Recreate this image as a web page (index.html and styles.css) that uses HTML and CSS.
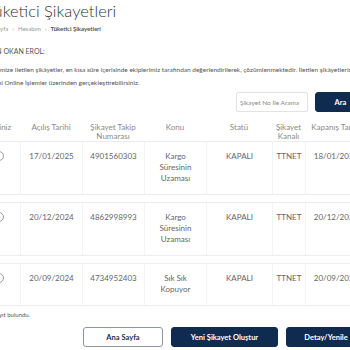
FILE: index.html
```html
<!DOCTYPE html>
<html lang="tr">
<head>
  <meta charset="UTF-8">
  <meta name="viewport" content="width=device-width, initial-scale=1.0">
  <title>Tüketici Şikayetleri</title>
  <link rel="stylesheet" href="styles.css">
</head>
<body>
  <div class="page">
    <div class="intro">
      <h1 class="page-title">Tüketici Şikayetleri</h1>
      <div class="breadcrumb">
        <span>Ana Sayfa</span><span class="sep">›</span><span>Hesabım</span><span class="sep">›</span><span class="current">Tüketici Şikayetleri</span>
      </div>
      <p class="greeting">SAYIN OKAN EROL:</p>
      <p class="info">Şirketimize iletilen şikâyetler, en kısa süre içerisinde ekiplerimiz tarafından değerlendirilerek, çözümlenmektedir. İletilen şikâyetlerinizin<br>takibini Online İşlemler üzerinden gerçekleştirebilirsiniz.</p>
    </div>

    <div class="search-bar">
      <input class="search-input" type="text" placeholder="Şikayet No İle Arama">
      <button class="btn btn-dark search-btn">Ara</button>
    </div>

    <div class="complaints">
      <div class="head">
        <div>Seçiniz</div>
        <div>Açılış Tarihi</div>
        <div>Şikayet Takip Numarası</div>
        <div>Konu</div>
        <div>Statü</div>
        <div>Şikayet Kanalı</div>
        <div>Kapanış Tarihi</div>
      </div>
      <div class="row">
        <div><span class="radio"></span></div>
        <div>17/01/2025</div>
        <div>4901560303</div>
        <div>Kargo<br>Süresinin<br>Uzaması</div>
        <div>KAPALI</div>
        <div>TTNET</div>
        <div>18/01/2025</div>
      </div>
      <div class="row">
        <div><span class="radio"></span></div>
        <div>20/12/2024</div>
        <div>4862998993</div>
        <div>Kargo<br>Süresinin<br>Uzaması</div>
        <div>KAPALI</div>
        <div>TTNET</div>
        <div>20/12/2024</div>
      </div>
      <div class="row">
        <div><span class="radio"></span></div>
        <div>20/09/2024</div>
        <div>4734952403</div>
        <div>Sık Sık<br>Kopuyor</div>
        <div>KAPALI</div>
        <div>TTNET</div>
        <div>20/09/2024</div>
      </div>
    </div>

    <p class="count">3 kayıt bulundu.</p>

    <div class="actions">
      <button class="btn btn-light">Ana Sayfa</button>
      <button class="btn btn-dark wide">Yeni Şikayet Oluştur</button>
      <button class="btn btn-dark">Detay/Yenile</button>
    </div>
  </div>
</body>
</html>
```

FILE: styles.css
```css
body {
  margin: 0;
  overflow: hidden;
  background: #ffffff;
  font-family: 'Lato', 'Open Sans', sans-serif;
  color: #444;
}
.page {
  width: 388px;
  margin-left: -22px;
}
.intro {
  padding-left: 4px;
}
.page-title {
  margin: 0 0 0 4px;
  font-size: 16.5px;
  font-weight: 300;
  color: #333;
  line-height: 22px;
  white-space: nowrap;
}
.breadcrumb {
  margin-top: 3px;
  font-size: 6px;
  line-height: 8px;
  color: #999;
  white-space: nowrap;
}
.breadcrumb .sep {
  margin: 0 4px;
}
.breadcrumb .current {
  color: #555;
  font-weight: 700;
}
.greeting {
  margin: 14px 0 0;
  font-size: 7px;
  line-height: 9px;
  color: #555;
}
.info {
  margin: 7px 0 0;
  font-size: 6.5px;
  line-height: 13px;
  color: #555;
  white-space: nowrap;
}
.search-bar {
  display: flex;
  justify-content: flex-end;
  gap: 7px;
  margin-top: 3px;
}
.search-input {
  width: 72px;
  height: 20px;
  box-sizing: border-box;
  border: 1px solid #e3e3e3;
  border-radius: 2px;
  padding: 0 3px;
  font-family: inherit;
  font-size: 6.5px;
  color: #666;
}
.search-input::placeholder {
  color: #888;
}
.btn {
  height: 20px;
  border-radius: 3px;
  font-family: inherit;
  font-size: 7.5px;
  font-weight: 700;
  cursor: pointer;
}
.btn-dark {
  background: #0f2b50;
  border: 1px solid #0f2b50;
  color: #ffffff;
}
.btn-light {
  background: #ffffff;
  border: 1px solid #8b95a5;
  color: #1c2f4d;
}
.search-btn {
  width: 51px;
}
.complaints {
  display: flex;
  flex-direction: column;
  gap: 7px;
  margin-top: 11px;
  font-size: 8px;
}
.head,
.row {
  display: grid;
  grid-template-columns: 42px 62px 62px 62px 66px 33px 61px;
  text-align: center;
}
.head {
  margin-bottom: -7px;
  color: #8a8a8a;
  line-height: 9px;
}
.head div {
  padding: 0 3px;
}
.row {
  border-top: 1px solid #ececec;
  border-bottom: 1px solid #ececec;
  color: #666;
  line-height: 11px;
}
.row div {
  padding: 9px 2px 10px;
  border-left: 1px solid #f3f3f3;
}
.row div:first-child {
  border-left: none;
}
.radio {
  display: inline-block;
  width: 8px;
  height: 8px;
  border: 1px solid #9a9a9a;
  border-radius: 50%;
}
.count {
  margin: 5px 0 0;
  padding-left: 10px;
  font-size: 6px;
  line-height: 8px;
  color: #555;
}
.actions {
  display: flex;
  justify-content: flex-end;
  gap: 8px;
  margin-top: 8px;
}
.actions .btn {
  width: 80px;
}
.actions .wide {
  width: 107px;
}
```
